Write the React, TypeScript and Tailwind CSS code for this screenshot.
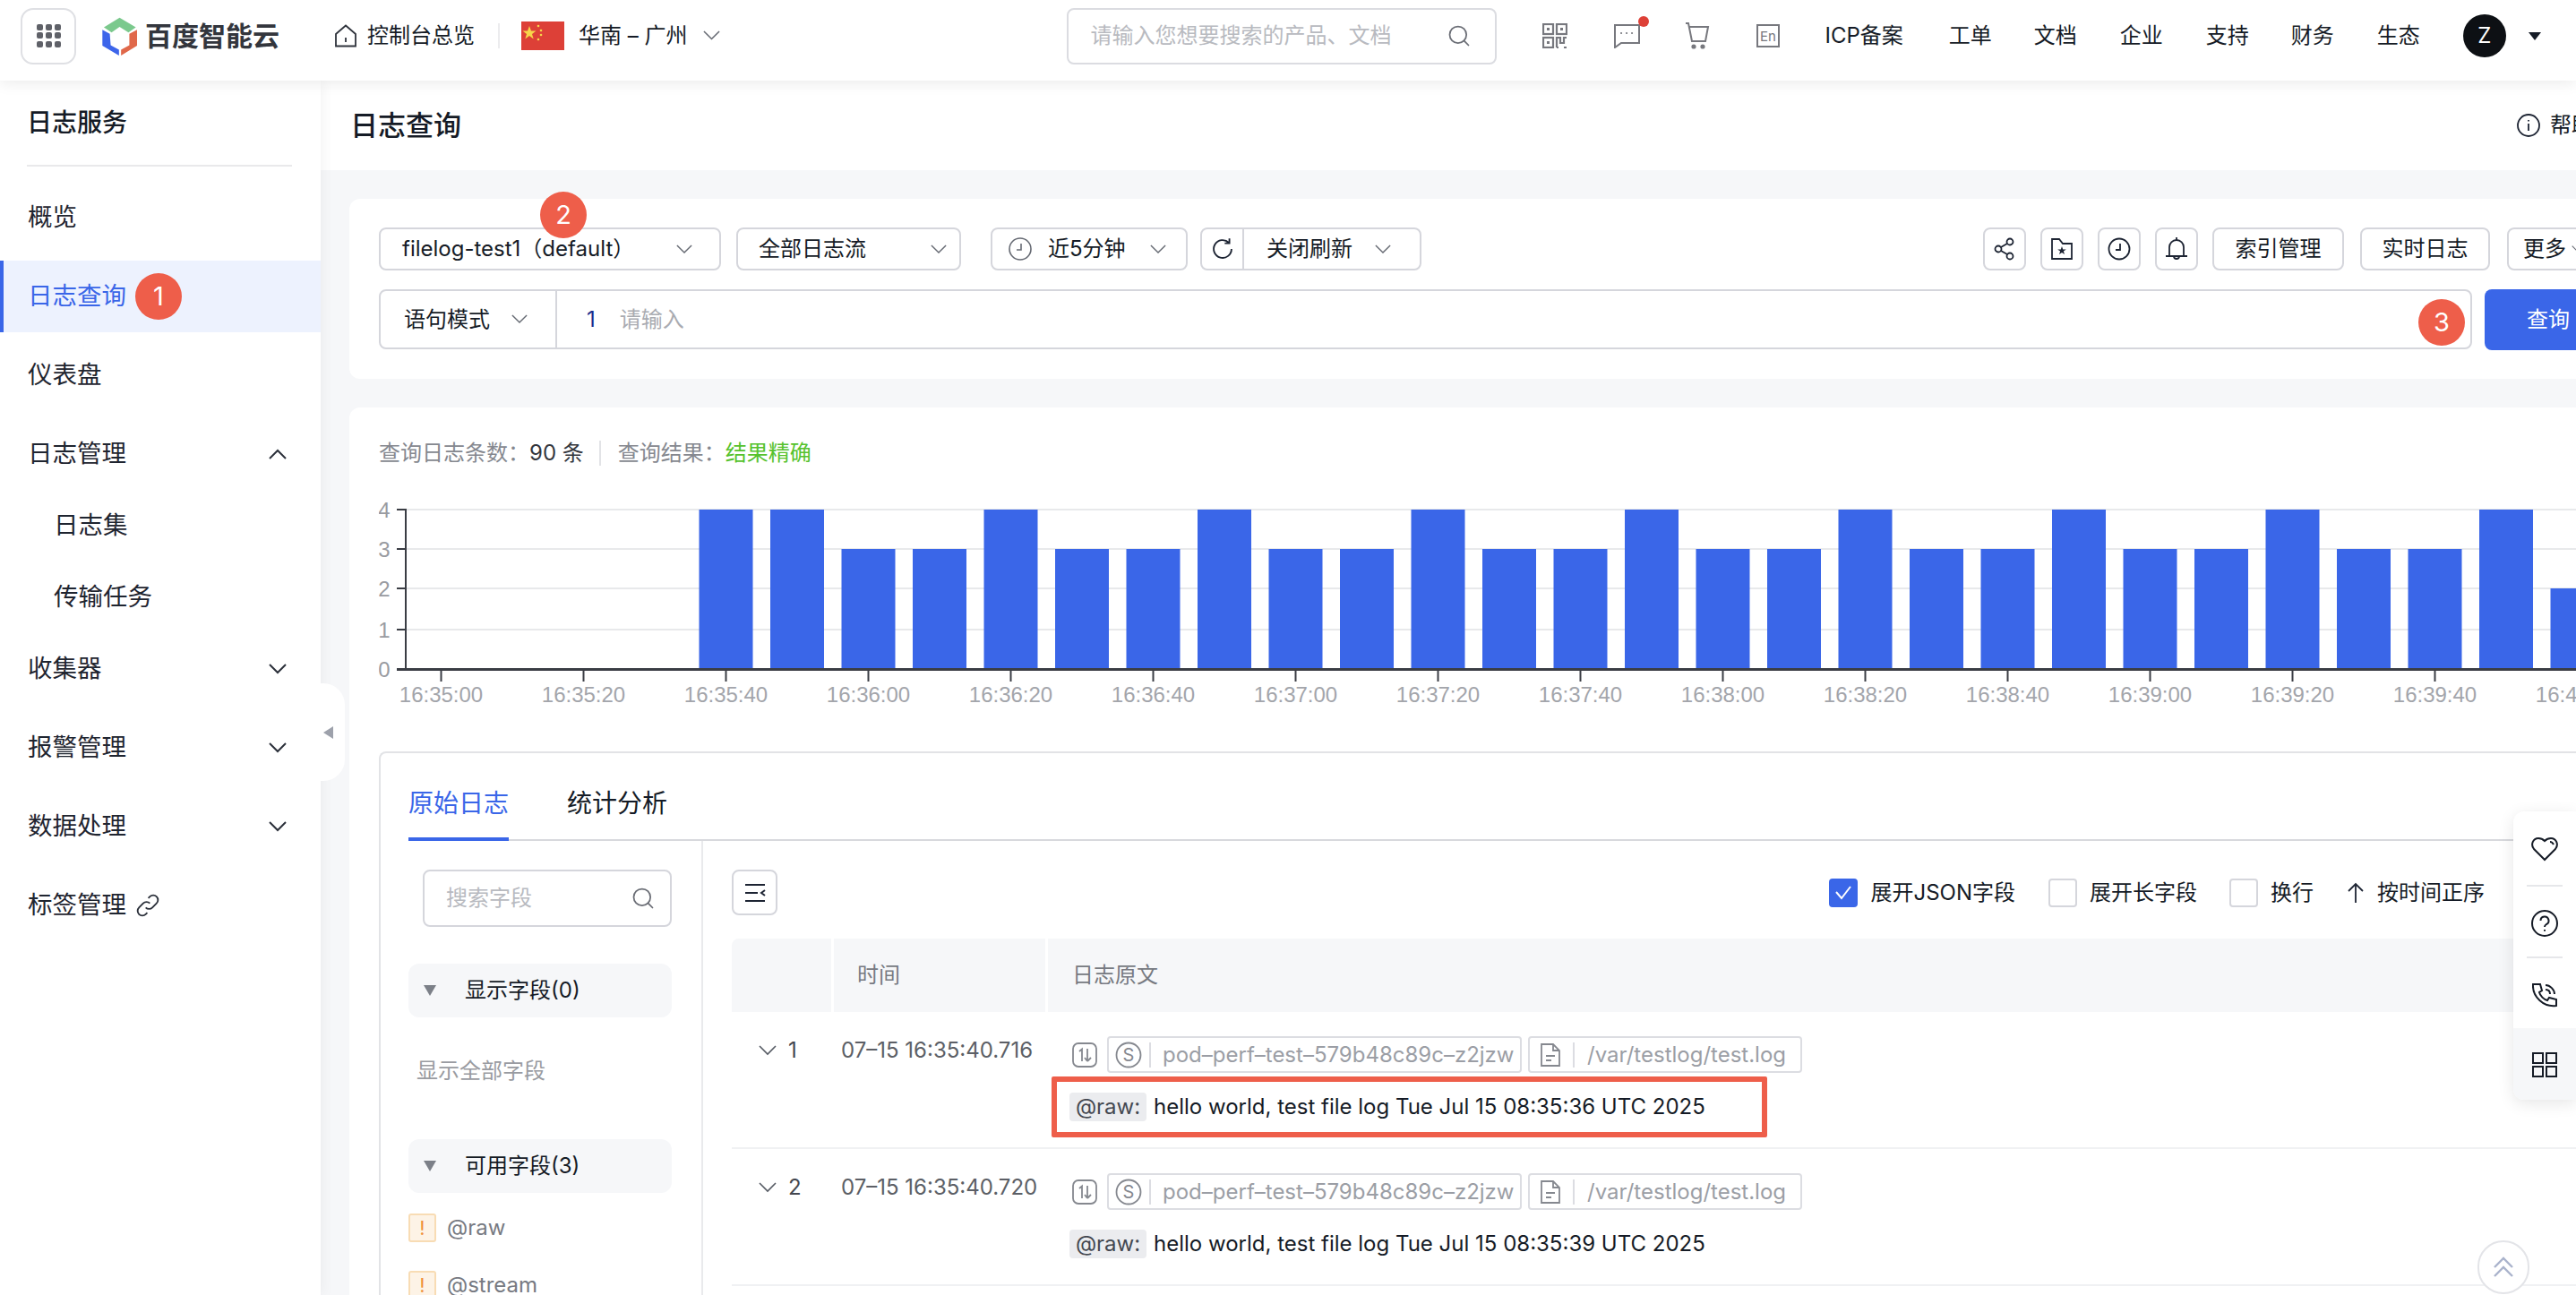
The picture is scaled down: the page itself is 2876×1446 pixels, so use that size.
import React from "react";
import { Search } from "lucide-react";

const barCounts = [4, 4, 3, 3, 4, 3, 3, 4, 3, 3, 4, 3, 3, 4, 3, 3, 4, 3, 3, 4, 3, 3, 4, 3, 3, 4, 2];
const tickLabels = [
  "16:35:00", "16:35:20", "16:35:40", "16:36:00", "16:36:20", "16:36:40", "16:37:00", "16:37:20",
  "16:37:40", "16:38:00", "16:38:20", "16:38:40", "16:39:00", "16:39:20", "16:39:40", "16:40:00",
];
const gridY = [748, 704, 658, 614, 570];

const Chev: React.FC<{ up?: boolean; w?: number; color?: string; sw?: number }> = ({ up, w = 18, color = "#666a73", sw = 1.6 }) => (
  <svg width={w} height={w * 0.6} viewBox="0 0 20 12" fill="none" className="shrink-0">
    <polyline points={up ? "1,11 10,2 19,11" : "1,1 10,10 19,1"} stroke={color} strokeWidth={sw} />
  </svg>
);

const Badge: React.FC<{ n: number; className?: string }> = ({ n, className = "" }) => (
  <span className={`flex h-[52px] w-[52px] shrink-0 items-center justify-center rounded-full bg-[#ee5e4a] text-[29px] text-white ${className}`}>{n}</span>
);

const NavItem: React.FC<{ label: string; chevron?: "up" | "down"; sub?: boolean }> = ({ label, chevron, sub }) => (
  <div className={`flex h-[80px] items-center justify-between pr-[38px] text-[27.5px] text-[#1f2530] ${sub ? "pl-[60px]" : "pl-[31px]"}`}>
    <span>{label}</span>
    {chevron && <Chev up={chevron === "up"} w={20} color="#2b303a" sw={2} />}
  </div>
);

const SelectBox: React.FC<{ width: string; children: React.ReactNode }> = ({ width, children }) => (
  <div className={`flex h-[48px] shrink-0 items-center rounded-[8px] border-2 border-[#d5d6dc] bg-white text-[24px] text-[#151b26] ${width}`}>{children}</div>
);

const IconBtn: React.FC<{ children: React.ReactNode }> = ({ children }) => (
  <div className="flex h-[48px] w-[48px] shrink-0 items-center justify-center rounded-[8px] border-2 border-[#d5d6dc] bg-white">{children}</div>
);

const Check: React.FC<{ on?: boolean }> = ({ on }) => (
  <span className={`flex h-[32px] w-[32px] shrink-0 items-center justify-center rounded-[4px] border-2 ${on ? "border-[#3a66e8] bg-[#3a66e8]" : "border-[#d5d6dc] bg-white"}`}>
    {on && (
      <svg width="20" height="16" viewBox="0 0 20 16" fill="none">
        <polyline points="2,7 8,14 18,1" stroke="#fff" strokeWidth="2" />
      </svg>
    )}
  </span>
);

const FieldHead: React.FC<{ label: string; className?: string }> = ({ label, className = "" }) => (
  <div className={`ml-[31px] flex h-[60px] w-[294px] items-center rounded-[12px] bg-[#f6f7f9] pl-[17px] text-[24px] text-[#151b26] ${className}`}>
    <span className="h-0 w-0 border-x-[7px] border-t-[12px] border-x-transparent border-t-[#7c8088]"></span>
    <span className="ml-[32px]">{label}</span>
  </div>
);

const FieldRow: React.FC<{ label: string; className?: string }> = ({ label, className = "" }) => (
  <div className={`ml-[31px] flex h-[32px] items-center ${className}`}>
    <span className="flex h-[32px] w-[31px] items-center justify-center rounded-[3px] border-2 border-[#f8dcb4] bg-[#fdf3e6] text-[22px] text-[#f0903a]">!</span>
    <span className="ml-[12px] text-[24px] text-[#777a82]">{label}</span>
  </div>
);

const LogRow: React.FC<{ n: number; time: string; stamp: string; marked?: boolean }> = ({ n, time, stamp, marked }) => (
  <div className="grid h-[153px] grid-cols-[114px_239px_1fr] border-b-2 border-[#f0f1f3]">
    <div className="mt-[25px] flex h-[36px] items-center pl-[30px]">
      <Chev w={20} color="#555a63" />
      <span className="ml-[13px] text-[24px] text-[#44474f]">{n}</span>
    </div>
    <div className="mt-[25px] h-[36px] pl-[8px] text-[24px] leading-[36px] text-[#5c5f66]">{time}</div>
    <div className="relative pl-[27px] pt-[27px]">
      <div className="flex h-[41px] items-center">
        <svg width="28" height="28" viewBox="0 0 28 28" fill="none" stroke="#85888f" strokeWidth="1.8">
          <rect x="1" y="1" width="26" height="26" rx="6" />
          <path d="M8 10l3-2.5V21M17 7v14m0 0l-3-4m3 4l4-4" />
        </svg>
        <div className="ml-[11px] flex h-[41px] w-[463px] items-center rounded-[4px] border-2 border-[#dcdde2] pl-[7px]">
          <svg width="30" height="30" viewBox="0 0 30 30" fill="none">
            <circle cx="15" cy="15" r="13.5" stroke="#85888f" strokeWidth="1.8" />
            <text x="15" y="22" textAnchor="middle" fontSize="20" fill="#85888f">S</text>
          </svg>
          <span className="ml-[8px] h-[28px] w-[2px] bg-[#dcdde2]"></span>
          <span className="ml-[13px] whitespace-nowrap text-[24px] text-[#9b9ea5]">pod–perf–test–579b48c89c–z2jzw</span>
        </div>
        <div className="ml-[7px] flex h-[41px] w-[306px] items-center rounded-[4px] border-2 border-[#dcdde2] pl-[12px]">
          <svg width="22" height="26" viewBox="0 0 22 26" fill="none" stroke="#85888f" strokeWidth="1.8">
            <path d="M1 1h13l7 7v17H1zM14 1v7h7M6 14h10M6 19h6" />
          </svg>
          <span className="ml-[14px] h-[28px] w-[2px] bg-[#dcdde2]"></span>
          <span className="ml-[14px] whitespace-nowrap text-[24px] text-[#9b9ea5]">/var/testlog/test.log</span>
        </div>
      </div>
      <div className="-ml-[3px] mt-[22px] flex h-[32px] items-center">
        <span className="flex h-[32px] w-[86px] items-center justify-center rounded-[4px] bg-[#ebecef] text-[24px] text-[#444851]">@raw:</span>
        <span className="ml-[8px] whitespace-nowrap text-[24px] text-[#151b26]">hello world, test file log Tue Jul 15 08:35:{stamp} UTC 2025</span>
      </div>
      {marked && <div className="absolute left-[4px] top-[72px] h-[68px] w-[799px] rounded-[2px] border-[6px] border-[#ee5e4a]"></div>}
    </div>
  </div>
);

const App: React.FC = () => {
  return (
    <div className="relative h-[1446px] w-[2876px] overflow-hidden bg-white font-['Inter','Noto_Sans_CJK_SC',sans-serif]">
      {/* Top bar */}
      <header className="relative z-20 flex h-[90px] items-center bg-white pb-[10px] text-[24px] text-[#151b26] shadow-[0_2px_16px_rgba(0,0,0,0.09)]">
        <div className="ml-[23px] grid h-[63px] w-[62px] shrink-0 grid-cols-3 place-items-center rounded-[14px] border-2 border-[#dfe0e4] px-[14px] py-[15px]">
          {Array.from({ length: 9 }).map((_, i) => (
            <span key={i} className="h-[7px] w-[7px] rounded-[2px] bg-[#5f6168]"></span>
          ))}
        </div>
        <svg width="43" height="47" viewBox="290 35 130 140" className="ml-[27px] shrink-0">
          <polygon points="302,75 355,42 410,75 385,92 355,73 328,92" fill="#7bc98d" />
          <polygon points="297,83 322,97 325,135 353,150 353,170 297,137" fill="#3d65ea" />
          <polygon points="414,83 414,137 360,170 360,150 388,135 388,97" fill="#e0684a" />
        </svg>
        <span className="ml-[7px] whitespace-nowrap text-[30px] font-bold leading-none text-[#33363d]">百度智能云</span>
        <svg width="26" height="26" viewBox="0 0 26 26" fill="none" stroke="#2f333c" strokeWidth="1.8" className="ml-[61px] shrink-0">
          <path d="M2 11L13 1.5 24 11v13.5H2zM13 15v5" />
        </svg>
        <span className="ml-[11px] whitespace-nowrap">控制台总览</span>
        <span className="ml-[26px] h-[28px] w-[2px] bg-[#ececee]"></span>
        <svg width="48" height="32" viewBox="0 0 48 32" className="ml-[24px] shrink-0">
          <rect width="48" height="32" fill="#dd4037" />
          <polygon points="9,5 11,10.5 16.5,10.5 12,14 13.7,19.5 9,16 4.3,19.5 6,14 1.5,10.5 7,10.5" fill="#f7d54a" />
          <circle cx="19" cy="5" r="1.3" fill="#f7d54a" />
          <circle cx="22" cy="10" r="1.3" fill="#f7d54a" />
          <circle cx="22" cy="15" r="1.3" fill="#f7d54a" />
          <circle cx="19" cy="20" r="1.3" fill="#f7d54a" />
        </svg>
        <span className="ml-[16px] whitespace-nowrap">华南 – 广州</span>
        <span className="ml-[17px]"><Chev w={19} color="#666a73" /></span>
        <div className="ml-[387px] flex h-[63px] w-[480px] shrink-0 items-center rounded-[8px] border-2 border-[#dbdce1] pl-[25px] pr-[26px]">
          <span className="whitespace-nowrap text-[#b8bac0]">请输入您想要搜索的产品、文档</span>
          <Search size={28} strokeWidth={1.5} color="#6a6d75" className="ml-auto" />
        </div>
        <svg width="28" height="28" viewBox="0 0 28 28" fill="none" stroke="#77787e" strokeWidth="2.2" className="ml-[51px] shrink-0">
          <rect x="1" y="1" width="11" height="11" />
          <rect x="16" y="1" width="11" height="11" />
          <rect x="1" y="16" width="11" height="11" />
          <rect x="5" y="5" width="3" height="3" fill="#77787e" strokeWidth="0" />
          <rect x="20" y="5" width="3" height="3" fill="#77787e" strokeWidth="0" />
          <rect x="5" y="20" width="3" height="3" fill="#77787e" strokeWidth="0" />
          <path d="M16 27V16h4v6h4v-6h3M24 27h3M16 27h2" />
        </svg>
        <div className="relative ml-[52px] shrink-0">
          <svg width="30" height="28" viewBox="0 0 30 28" fill="none" stroke="#77787e" strokeWidth="2">
            <path d="M1 2h27v20H8l-7 5zM8 11h.1M14 11h.1M20 11h.1" strokeLinecap="round" />
          </svg>
          <span className="absolute -right-[9px] -top-[8px] h-[12px] w-[12px] rounded-full bg-[#dd4037]"></span>
        </div>
        <svg width="28" height="30" viewBox="0 0 28 30" fill="none" stroke="#77787e" strokeWidth="2" className="ml-[49px] shrink-0">
          <path d="M1 1h3l4 20h15l3-16H5" />
          <circle cx="10" cy="27" r="1.6" fill="#77787e" />
          <circle cx="20" cy="27" r="1.6" fill="#77787e" />
        </svg>
        <svg width="26" height="26" viewBox="0 0 26 26" className="ml-[52px] shrink-0">
          <rect x="1" y="1" width="24" height="24" fill="none" stroke="#77787e" strokeWidth="2" />
          <text x="13" y="18.500" textAnchor="middle" fontSize="15" fill="#77787e">En</text>
        </svg>
        <span className="ml-[51px] whitespace-nowrap">ICP备案</span>
        <span className="ml-[51px] whitespace-nowrap">工单</span>
        <span className="ml-[47px] whitespace-nowrap">文档</span>
        <span className="ml-[48px] whitespace-nowrap">企业</span>
        <span className="ml-[48px] whitespace-nowrap">支持</span>
        <span className="ml-[47px] whitespace-nowrap">财务</span>
        <span className="ml-[48px] whitespace-nowrap">生态</span>
        <span className="ml-[48px] flex h-[48px] w-[48px] shrink-0 items-center justify-center rounded-full bg-[#0d1014] text-[24px] text-white">Z</span>
        <span className="ml-[25px] h-0 w-0 border-x-[7px] border-t-[9px] border-x-transparent border-t-[#151b26]"></span>
      </header>

      <div className="flex h-[1356px]">
        {/* Sidebar */}
        <aside className="relative z-10 w-[358px] shrink-0 bg-white shadow-[2px_0_14px_rgba(0,0,0,0.05)]">
          <div className="mx-[30px] flex h-[96px] w-[296px] items-center border-b-2 border-[#e9e9eb] text-[28px] font-medium text-[#151b26]">日志服务</div>
          <div className="mt-[17px] flex flex-col gap-[8px]">
            <NavItem label="概览" />
            <div className="flex h-[80px] items-center border-l-4 border-[#3a66e8] bg-[#edf2fe] pl-[27px] text-[27.5px] text-[#3a66e8]">
              <span>日志查询</span>
              <Badge n={1} className="ml-[10px]" />
            </div>
            <NavItem label="仪表盘" />
            <div>
              <NavItem label="日志管理" chevron="up" />
              <NavItem label="日志集" sub />
              <NavItem label="传输任务" sub />
              <NavItem label="收集器" chevron="down" />
            </div>
            <NavItem label="报警管理" chevron="down" />
            <NavItem label="数据处理" chevron="down" />
            <div className="flex h-[80px] items-center pl-[31px] text-[27.5px] text-[#1f2530]">
              <span>标签管理</span>
              <svg width="28" height="28" viewBox="0 0 24 24" fill="none" stroke="#2b303a" strokeWidth="1.6" className="ml-[10px]">
                <path d="M10 14a4.5 4.5 0 0 0 6.4 0l4-4a4.5 4.5 0 0 0-6.4-6.4l-1.5 1.5M14 10a4.5 4.5 0 0 0-6.4 0l-4 4a4.5 4.5 0 0 0 6.4 6.4l1.5-1.5" />
              </svg>
            </div>
          </div>
          {/* collapse handle */}
          <div className="absolute left-full top-[673px] flex h-[109px] w-[27px] items-center rounded-r-[24px] bg-white pl-[3px]">
            <span className="h-0 w-0 border-y-[7px] border-r-[11px] border-y-transparent border-r-[#9da1ab]"></span>
          </div>
        </aside>

        {/* Main */}
        <main className="min-w-0 flex-1 overflow-hidden bg-[#f6f7f9]">
          <div className="flex h-[100px] w-full items-center bg-white pl-[33px]">
            <span className="text-[31px] font-medium text-[#151b26]">日志查询</span>
            <svg width="26" height="26" viewBox="0 0 26 26" fill="none" stroke="#1d2433" strokeWidth="1.8" className="ml-auto">
              <circle cx="13" cy="13" r="12" />
              <path d="M13 11v8M13 7v1.5" />
            </svg>
            <span className="ml-[11px] w-[29px] overflow-hidden whitespace-nowrap text-[24px] text-[#151b26]">帮助</span>
          </div>

          {/* Query card */}
          <section className="ml-[32px] mt-[32px] h-[201px] w-[2548px] rounded-[12px] bg-white px-[33px] pt-[32px]">
            <div className="flex items-center">
              <div className="relative">
                <SelectBox width="w-[382px] pl-[24px]">
                  <span className="whitespace-nowrap">filelog-test1（default）</span>
                  <span className="ml-auto mr-[30px]"><Chev /></span>
                </SelectBox>
                <Badge n={2} className="absolute left-[180px] top-[-40px]" />
              </div>
              <div className="ml-[17px]">
                <SelectBox width="w-[251px] pl-[23px]">
                  <span className="whitespace-nowrap">全部日志流</span>
                  <span className="ml-auto mr-[14px]"><Chev /></span>
                </SelectBox>
              </div>
              <div className="ml-[33px]">
                <SelectBox width="w-[220px] pl-[18px]">
                  <svg width="26" height="26" viewBox="0 0 26 26" fill="none" stroke="#666a73" strokeWidth="1.6" className="shrink-0">
                    <circle cx="13" cy="13" r="12" />
                    <path d="M14 7v7H9" />
                  </svg>
                  <span className="ml-[18px] whitespace-nowrap">近5分钟</span>
                  <span className="ml-auto mr-[22px]"><Chev /></span>
                </SelectBox>
              </div>
              <div className="ml-[14px]">
                <SelectBox width="w-[247px]">
                  <span className="flex h-full w-[47px] shrink-0 items-center justify-center border-r-2 border-[#d5d6dc]">
                    <svg width="28" height="28" viewBox="0 0 24 24" fill="none" stroke="#1d2433" strokeWidth="1.6">
                      <path d="M20.5 12a8.5 8.5 0 1 1-2.500-6M18.500 2v4.500H14" />
                    </svg>
                  </span>
                  <span className="ml-[25px] whitespace-nowrap">关闭刷新</span>
                  <span className="ml-auto mr-[32px]"><Chev /></span>
                </SelectBox>
              </div>
              <div className="ml-auto flex items-center">
                <IconBtn>
                  <svg width="24" height="26" viewBox="0 0 24 26" fill="none" stroke="#1d2433" strokeWidth="1.8">
                    <circle cx="18" cy="5" r="3.5" /><circle cx="5" cy="13" r="3.5" /><circle cx="18" cy="21" r="3.5" />
                    <path d="M8 11l7-4M8 15l7 4" />
                  </svg>
                </IconBtn>
                <span className="ml-[16px]">
                  <IconBtn>
                    <svg width="24" height="24" viewBox="0 0 24 24" fill="none" stroke="#1d2433" strokeWidth="1.8">
                      <path d="M1 1h8l4 5h10v17H1z" />
                      <polygon points="12,9 13.2,12.4 16.8,12.500 13.900,14.600 15,18 12,16 9,18 10.100,14.600 7.200,12.500 10.800,12.400" fill="#1d2433" strokeWidth="0" />
                    </svg>
                  </IconBtn>
                </span>
                <span className="ml-[16px]">
                  <IconBtn>
                    <svg width="26" height="26" viewBox="0 0 26 26" fill="none" stroke="#1d2433" strokeWidth="1.8">
                      <circle cx="13" cy="13" r="11.5" />
                      <path d="M14 7v7H9" />
                    </svg>
                  </IconBtn>
                </span>
                <span className="ml-[16px]">
                  <IconBtn>
                    <svg width="26" height="28" viewBox="0 0 26 28" fill="none" stroke="#1d2433" strokeWidth="1.8">
                      <path d="M13 1v3M5 21V12a8 8 0 0 1 16 0v9M1 22h24M10 22a3 3 0 0 0 6 0" />
                    </svg>
                  </IconBtn>
                </span>
                <div className="ml-[16px]">
                  <SelectBox width="w-[147px] justify-center">索引管理</SelectBox>
                </div>
                <div className="ml-[18px]">
                  <SelectBox width="w-[145px] justify-center">实时日志</SelectBox>
                </div>
                <div className="ml-[19px]">
                  <SelectBox width="w-[106px] pl-[16px]">
                    <span className="whitespace-nowrap">更多</span>
                    <span className="ml-[6px]"><Chev w={14} /></span>
                  </SelectBox>
                </div>
              </div>
            </div>

            <div className="mt-[21px] flex h-[68px] items-stretch">
              <div className="flex h-[67px] min-w-0 w-[2337px] items-center rounded-[8px] border-2 border-[#d5d6dc] text-[24px]">
                <div className="flex h-full w-[197px] shrink-0 items-center border-r-2 border-[#d5d6dc] pl-[26px] text-[#151b26]">
                  <span className="whitespace-nowrap">语句模式</span>
                  <span className="ml-[24px]"><Chev /></span>
                </div>
                <span className="ml-[33px] text-[#1b2f8e]">1</span>
                <span className="ml-[27px] whitespace-nowrap text-[#a9abb1]">请输入</span>
                <Badge n={3} className="ml-auto mr-[6px] mt-[6px]" />
              </div>
              <div className="ml-[14px] flex h-[68px] w-[131px] items-center rounded-[8px] bg-[#3a66e8] pl-[47px] text-[24px] text-white">查询</div>
            </div>
          </section>

          {/* Results card */}
          <section className="ml-[32px] mt-[32px] h-[1000px] w-[2548px] rounded-t-[12px] bg-white pl-[33px] pt-[33px]">
            <div className="flex h-[36px] items-center text-[24px] leading-[36px] text-[#85888f]">
              <span>查询日志条数：</span>
              <span className="text-[#33363d]">90 条</span>
              <span className="ml-[17px] h-[28px] w-[2px] bg-[#e2e3e6]"></span>
              <span className="ml-[19px]">查询结果：</span>
              <span className="text-[#56c22d]">结果精确</span>
            </div>

            <svg width="2515" height="245" viewBox="423 555 2515 245" className="mt-[30px] block">
              {gridY.slice(1).map((y) => (
                <line key={y} x1="453" x2="2938" y1={y} y2={y} stroke="#e8e9eb" strokeWidth="2" />
              ))}
              {barCounts.map((c, i) => {
                const top = gridY[c];
                return <rect key={i} x={780.5 + i * 79.5} y={top} width="60" height={748 - top} fill="#3a66e8" />;
              })}
              <line x1="453" x2="453" y1="569" y2="749" stroke="#3a3d44" strokeWidth="2" />
              <line x1="443" x2="2938" y1="748.5" y2="748.5" stroke="#3a3d44" strokeWidth="3" />
              {gridY.map((y, i) => (
                <g key={y}>
                  <line x1="443" x2="453" y1={y} y2={y} stroke="#3a3d44" strokeWidth="2" />
                  <text x="429" y={y + 9} textAnchor="middle" fontSize="24" fill="#999ba1" fontFamily="Liberation Sans, sans-serif">{i}</text>
                </g>
              ))}
              {tickLabels.map((t, i) => {
                const x = 492.5 + i * 159;
                return (
                  <g key={t}>
                    <line x1={x} x2={x} y1="749" y2="762" stroke="#3a3d44" strokeWidth="2" />
                    <text x={x} y="785" textAnchor="middle" fontSize="24" fill="#a3a5ab" fontFamily="Liberation Sans, sans-serif">{t}</text>
                  </g>
                );
              })}
            </svg>

            {/* Log panel */}
            <div className="mt-[40px] h-[700px] rounded-tl-[8px] border-l-2 border-t-2 border-[#e2e3e6]">
              <div className="ml-[31px] flex h-[98px] gap-[65px] border-b-2 border-[#d8d9dd] text-[28px] leading-[42px]">
                <span className="-mb-[2px] h-[98px] border-b-4 border-[#3a66e8] pt-[35px] text-[#3a66e8]">原始日志</span>
                <span className="pt-[35px] text-[#151b26]">统计分析</span>
              </div>
              <div className="flex h-[600px]">
                <div className="w-[358px] shrink-0 pt-[32px]">
                  <div className="ml-[47px] flex h-[64px] w-[278px] items-center justify-between rounded-[8px] border-2 border-[#d5d6dc] pl-[24px] pr-[16px] text-[24px] text-[#b8bac0]">
                    <span>搜索字段</span>
                    <Search size={28} strokeWidth={1.5} color="#6a6d75" />
                  </div>
                  <FieldHead label="显示字段(0)" className="mt-[41px]" />
                  <div className="ml-[40px] mt-[40px] h-[40px] text-[24px] leading-[40px] text-[#999ba1]">显示全部字段</div>
                  <FieldHead label="可用字段(3)" className="mt-[56px]" />
                  <FieldRow label="@raw" className="mt-[23px]" />
                  <FieldRow label="@stream" className="mt-[32px]" />
                </div>
                <div className="min-w-0 flex-1 border-l-2 border-[#e9eaec] pl-[32px] pt-[32px]">
                  <div className="flex h-[51px] items-center pr-[164px] text-[24px] text-[#151b26]">
                    <div className="flex h-[51px] w-[51px] shrink-0 items-center justify-center rounded-[8px] border-2 border-[#d5d6dc]">
                      <svg width="24" height="22" viewBox="0 0 24 22" fill="none" stroke="#1d2433" strokeWidth="2">
                        <path d="M1 2h22M1 11h14M1 20h22M23 8l-4 3 4 3" />
                      </svg>
                    </div>
                    <span className="ml-auto"><Check on /></span>
                    <span className="ml-[14px] whitespace-nowrap">展开JSON字段</span>
                    <span className="ml-[37px]"><Check /></span>
                    <span className="ml-[14px] whitespace-nowrap">展开长字段</span>
                    <span className="ml-[36px]"><Check /></span>
                    <span className="ml-[14px] whitespace-nowrap">换行</span>
                    <svg width="20" height="24" viewBox="0 0 20 24" fill="none" stroke="#1d2433" strokeWidth="1.8" className="ml-[37px]">
                      <path d="M10 23V2M2 10l8-8 8 8" />
                    </svg>
                    <span className="ml-[14px] whitespace-nowrap">按时间正序</span>
                  </div>
                  <div className="mt-[26px] grid h-[82px] grid-cols-[114px_239px_1fr] rounded-tl-[8px] bg-[#f6f7f9] text-[24px] text-[#777a82]">
                    <div className="border-r-[3px] border-white"></div>
                    <div className="flex items-center border-r-[3px] border-white pl-[26px]">时间</div>
                    <div className="flex items-center pl-[27px]">日志原文</div>
                  </div>
                  <LogRow n={1} time="07–15 16:35:40.716" stamp="36" marked />
                  <LogRow n={2} time="07–15 16:35:40.720" stamp="39" />
                </div>
              </div>
            </div>
          </section>
        </main>
      </div>

      {/* Floating tools */}
      <div className="absolute right-0 top-[906px] z-30 w-[70px] overflow-hidden rounded-l-[12px] bg-white shadow-[0_4px_18px_rgba(0,0,0,0.1)]">
        <div className="flex h-[82px] items-center justify-center pt-[2px]">
          <svg width="30" height="28" viewBox="0 0 30 28" fill="none" stroke="#151b26" strokeWidth="2">
            <path d="M15 26L3 14C-1 9 2 2 8 2c3 0 5 1 7 3 2-2 4-3 7-3 6 0 9 7 5 12z" />
            <path d="M21 6c2 0 3 1 4 3" />
          </svg>
        </div>
        <div className="mx-auto h-[2px] w-[40px] bg-[#e6e7ea]"></div>
        <div className="flex h-[78px] items-center justify-center pt-[3px]">
          <svg width="30" height="30" viewBox="0 0 30 30" fill="none" stroke="#151b26" strokeWidth="2">
            <circle cx="15" cy="15" r="14" />
            <path d="M10.5 12a4.5 4.5 0 1 1 6.5 4c-1.400 .8-2 1.500-2 3M15 22v1.800" />
          </svg>
        </div>
        <div className="mx-auto h-[2px] w-[40px] bg-[#e6e7ea]"></div>
        <div className="flex h-[78px] items-center justify-center pt-[4px]">
          <svg width="28" height="28" viewBox="0 0 28 28" fill="none" stroke="#151b26" strokeWidth="2">
            <path d="M1 2h8l2 7-3 2c1 4 5 8 9 9l2-3 8 2v7c-14 2-27-10-26-24zM15 3c5 0 10 5 10 10M15 8c3 0 5 2 5 5" />
          </svg>
        </div>
        <div className="flex h-[80px] items-center justify-center bg-[#f6f7f9] pt-[2px]">
          <svg width="28" height="28" viewBox="0 0 28 28" fill="none" stroke="#151b26" strokeWidth="2">
            <rect x="1" y="1" width="11" height="11" /><rect x="16" y="1" width="11" height="11" />
            <rect x="1" y="16" width="11" height="11" /><rect x="16" y="16" width="11" height="11" />
          </svg>
        </div>
      </div>

      <div className="absolute left-[2766px] top-[1385px] z-30 flex h-[60px] w-[58px] items-center justify-center rounded-full border-2 border-[#e3e4e8] bg-white">
        <svg width="24" height="24" viewBox="0 0 24 24" fill="none" stroke="#aab3cc" strokeWidth="2.4">
          <path d="M2 12L12 2l10 10M2 22l10-10 10 10" />
        </svg>
      </div>
    </div>
  );
};

export default App;
